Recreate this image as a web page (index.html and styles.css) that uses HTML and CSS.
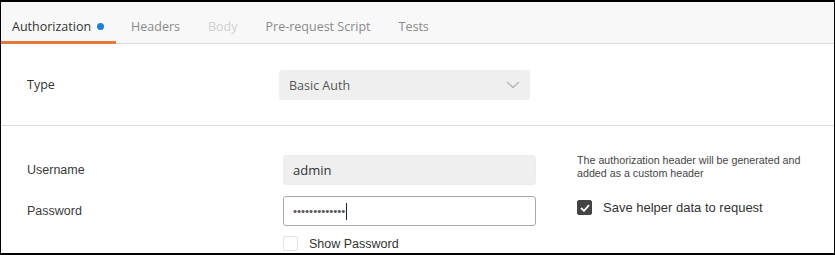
FILE: index.html
```html
<!DOCTYPE html>
<html lang="en">
<head>
  <meta charset="UTF-8">
  <title>Authorization</title>
  <link rel="stylesheet" href="styles.css">
</head>
<body>
  <div class="frame">
    <div class="tabs">
      <div class="tab active">Authorization <span class="dot"></span></div>
      <div class="tab">Headers</div>
      <div class="tab disabled">Body</div>
      <div class="tab">Pre-request Script</div>
      <div class="tab">Tests</div>
    </div>

    <div class="type-row">
      <div class="label os">Type</div>
      <div class="select">
        <span>Basic Auth</span>
        <svg width="14" height="8" viewBox="0 0 14 8"><path d="M1 1 L7 6.5 L13 1" fill="none" stroke="#b5b5b5" stroke-width="1.3"/></svg>
      </div>
    </div>

    <div class="fields">
      <div class="field-col">
        <div class="row">
          <div class="label">Username</div>
          <div class="input filled">admin</div>
        </div>
        <div class="row">
          <div class="label">Password</div>
          <div class="input focused"><span class="dots">•••••••••••••</span><span class="caret"></span></div>
        </div>
        <div class="row">
          <div class="label"></div>
          <label class="check"><span class="box"></span>Show Password</label>
        </div>
      </div>
      <div class="side">
        <p class="hint">The authorization header will be generated and added as a custom header</p>
        <label class="check save">
          <span class="box checked">
            <svg width="10" height="8" viewBox="0 0 10 8"><path d="M1 4 L4 6.8 L9 1.2" fill="none" stroke="#fff" stroke-width="1.8"/></svg>
          </span>
          Save helper data to request
        </label>
      </div>
    </div>
  </div>
</body>
</html>
```

FILE: styles.css
```css
html, body {
  margin: 0;
  padding: 0;
  background: #fff;
}

.frame {
  box-sizing: border-box;
  width: 835px;
  height: 255px;
  border: 1px solid #000;
  border-top-width: 2px;
  border-bottom-width: 2px;
  overflow: hidden;
  font-family: 'Liberation Sans', Arial, sans-serif;
  color: #333;
}

.os {
  font-family: 'Open Sans', sans-serif;
}

.tabs {
  display: flex;
  height: 41px;
  background: #f8f8f8;
  border-bottom: 1px solid #dcdcdc;
  font-family: 'Open Sans', sans-serif;
  font-size: 12.5px;
}

.tab {
  display: flex;
  align-items: center;
  padding: 9px 13px 0 15px;
  color: #8a8a8a;
  border-bottom: 3px solid transparent;
  margin-bottom: -1px;
}

.tab.active {
  color: #333;
  padding-left: 11px;
  padding-right: 12px;
  border-bottom-color: #e5783c;
}

.tab.disabled {
  color: #cfcfcf;
}

.dot {
  display: inline-block;
  width: 7px;
  height: 7px;
  border-radius: 50%;
  background: #1c7fe2;
  margin-left: 6px;
}

.type-row {
  display: flex;
  align-items: center;
  height: 81px;
  padding-left: 26px;
  border-bottom: 1px solid #dcdcdc;
}

.type-row .label {
  width: 252px;
  font-size: 12.5px;
}

.select {
  box-sizing: border-box;
  width: 251px;
  height: 30px;
  margin-top: 1px;
  background: #efefef;
  border-radius: 3px;
  display: flex;
  align-items: center;
  justify-content: space-between;
  padding: 0 10px 0 10px;
  font-family: 'Open Sans', sans-serif;
  font-size: 12.5px;
  color: #555;
}

.fields {
  display: flex;
  padding: 29px 0 0 26px;
}

.field-col {
  width: 550px;
}

.row {
  display: flex;
  align-items: center;
  margin-bottom: 11px;
}

.row .label {
  width: 256px;
  font-size: 12.5px;
  color: #3a3a3a;
}

.input {
  box-sizing: border-box;
  width: 253px;
  height: 30px;
  border-radius: 3px;
  display: flex;
  align-items: center;
  padding: 0 9px;
  font-family: 'Open Sans', sans-serif;
  font-size: 13px;
  color: #333;
}

.input.filled {
  background: #efefef;
  border: 1px solid #ececec;
}

.input.focused {
  background: #fff;
  border: 1px solid #a9a9a9;
}

.dots {
  font-family: 'Liberation Sans', Arial, sans-serif;
  font-size: 11.5px;
  color: #555;
}

.caret {
  display: inline-block;
  width: 1px;
  height: 17px;
  background: #222;
  margin-left: 1px;
}

.check {
  display: flex;
  align-items: center;
  font-size: 12.5px;
  color: #333;
}

.box {
  box-sizing: border-box;
  width: 15px;
  height: 15px;
  border: 1px solid #e2e2e2;
  border-radius: 2px;
  margin-right: 11px;
  display: flex;
  align-items: center;
  justify-content: center;
}

.box.checked {
  background: #444;
  border-color: #444;
}

.row .check {
  margin-top: -1px;
}

.hint {
  margin: -1px 0 0;
  width: 240px;
  font-size: 10.7px;
  line-height: 13px;
  color: #444;
}

.check.save {
  margin-top: 20px;
  font-size: 13px;
}
```
